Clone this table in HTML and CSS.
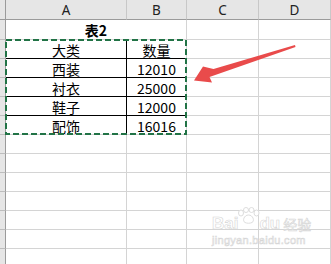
FILE: index.html
```html
<!DOCTYPE html>
<html>

<head>
    <meta charset="UTF-8" />
    <title>表2</title>
    <link rel="stylesheet" href="styles.css">
</head>

<body>
    <div class="sheet">
        <!-- column headers -->
        <div class="corner"></div>
        <div class="colhead">A</div>
        <div class="colhead">B</div>
        <div class="colhead">C</div>
        <div class="colhead">D</div>

        <!-- row 1: merged title -->
        <div class="rowhead"></div>
        <div class="cell title">表2</div>
        <div class="cell"></div>
        <div class="cell"></div>

        <!-- rows 2-6: the table -->
        <div class="rowhead"></div>
        <div class="cell t-a t-line">大类</div>
        <div class="cell t-b t-line">数量</div>
        <div class="cell"></div>
        <div class="cell"></div>

        <div class="rowhead"></div>
        <div class="cell t-a t-line">西装</div>
        <div class="cell t-b t-line">12010</div>
        <div class="cell"></div>
        <div class="cell"></div>

        <div class="rowhead"></div>
        <div class="cell t-a t-line">衬衣</div>
        <div class="cell t-b t-line">25000</div>
        <div class="cell"></div>
        <div class="cell"></div>

        <div class="rowhead"></div>
        <div class="cell t-a t-line">鞋子</div>
        <div class="cell t-b t-line">12000</div>
        <div class="cell"></div>
        <div class="cell"></div>

        <div class="rowhead"></div>
        <div class="cell t-a">配饰</div>
        <div class="cell t-b">16016</div>
        <div class="cell"></div>
        <div class="cell"></div>

        <!-- empty rows -->
        <div class="rowhead"></div><div class="cell"></div><div class="cell"></div><div class="cell"></div><div class="cell"></div>
        <div class="rowhead"></div><div class="cell"></div><div class="cell"></div><div class="cell"></div><div class="cell"></div>
        <div class="rowhead"></div><div class="cell"></div><div class="cell"></div><div class="cell"></div><div class="cell"></div>
        <div class="rowhead"></div><div class="cell"></div><div class="cell"></div><div class="cell"></div><div class="cell"></div>
        <div class="rowhead"></div><div class="cell"></div><div class="cell"></div><div class="cell"></div><div class="cell"></div>
        <div class="rowhead"></div><div class="cell"></div><div class="cell"></div><div class="cell"></div><div class="cell"></div>
        <div class="rowhead"></div><div class="cell"></div><div class="cell"></div><div class="cell"></div><div class="cell"></div>
        <div class="rowhead"></div><div class="cell"></div><div class="cell"></div><div class="cell"></div><div class="cell"></div>

        <!-- copy marquee around A2:B6 -->
        <svg class="marquee" width="182" height="96" viewBox="0 0 182 96">
            <rect x="1" y="1" width="180" height="94" fill="none" stroke="#217346" stroke-width="2" stroke-dasharray="6 3" />
        </svg>
    </div>

    <svg class="arrow" width="331" height="264" viewBox="0 0 331 264">
        <polygon points="295,45 213.5,69 203,66.5 194,80.5 212,82.5 209.5,77 295.5,47" fill="#e94b4b" />
    </svg>

    <div class="watermark">
        <div class="wm-logo">
            <span>Bai</span>
            <svg class="paw" width="25" height="17" viewBox="0 0 25 17">
                <g fill="#fff" stroke="#ddd" stroke-width="1">
                    <ellipse cx="5" cy="6" rx="2.5" ry="3" />
                    <ellipse cx="10" cy="3" rx="2.5" ry="2.5" />
                    <ellipse cx="15.5" cy="3" rx="2.5" ry="2.5" />
                    <ellipse cx="20.5" cy="6" rx="2.5" ry="3" />
                    <path d="M12.5 8 C8 8 6 14 9 15.5 C11 16.5 14 16.5 16 15.5 C19 14 17 8 12.5 8 Z" />
                </g>
            </svg>
            <span>du</span>
            <span class="wm-cn">经验</span>
        </div>
        <div class="wm-url">jingyan.baidu.com</div>
    </div>
</body>

</html>
```

FILE: styles.css
```css
body {
    margin: 0;
    position: relative;
    width: 331px;
    height: 264px;
    overflow: hidden;
    background: white;
    font-family: "Noto Sans CJK SC", "Noto Sans", sans-serif;
}

.sheet {
    position: relative;
    display: grid;
    grid-template-columns: 6px 121px 60px 72px 72px;
    grid-template-rows: 20px 20px repeat(12, 19px);
}

.sheet > div {
    box-sizing: border-box;
}

.corner {
    background: #e6e6e6;
    border-right: 1px solid #9b9b9b;
    border-bottom: 1px solid #9b9b9b;
}

.colhead {
    background: #e6e6e6;
    border-right: 1px solid #c8c8c8;
    border-bottom: 1px solid #9b9b9b;
    font-family: "Noto Sans", sans-serif;
    font-size: 13.5px;
    line-height: 20px;
    color: #222;
    text-align: center;
}

.rowhead {
    background: #e6e6e6;
    border-right: 1px solid #9b9b9b;
    border-bottom: 1px solid #bdbdbd;
}

.cell {
    border-right: 1px solid #d4d4d4;
    border-bottom: 1px solid #d4d4d4;
    display: flex;
    align-items: flex-end;
    justify-content: center;
    font-size: 14px;
    line-height: 14px;
    color: #000;
}

.title {
    grid-column: 2 / 4;
    font-weight: bold;
    padding-bottom: 2px;
}

.t-a {
    border-right-color: #000;
    padding-bottom: 1px;
}

.t-b {
    padding-bottom: 1px;
}

.t-line {
    border-bottom-color: #000;
}

/* dashed copy border drawn over the cells */
.marquee {
    position: absolute;
    left: 5px;
    top: 39px;
}

.arrow {
    position: absolute;
    left: 0;
    top: 0;
}

.watermark {
    position: absolute;
    left: 212px;
    top: 207px;
    white-space: nowrap;
    color: rgba(255, 255, 255, 0.7);
    -webkit-text-stroke: 0.6px #d6d6d6;
}

.wm-logo {
    display: flex;
    align-items: flex-end;
    font-family: "Liberation Sans", sans-serif;
    font-size: 17px;
    line-height: 16px;
    font-weight: bold;
}

.wm-logo .paw {
    margin: 0 -2px 8px -2px;
}

.wm-cn {
    margin-left: 3px;
    font-family: "Noto Sans CJK SC", sans-serif;
    font-size: 14px;
    font-weight: normal;
}

.wm-url {
    margin-top: 3px;
    font-family: "Liberation Sans", sans-serif;
    font-size: 11px;
    line-height: 11px;
    letter-spacing: 0.3px;
}
```
